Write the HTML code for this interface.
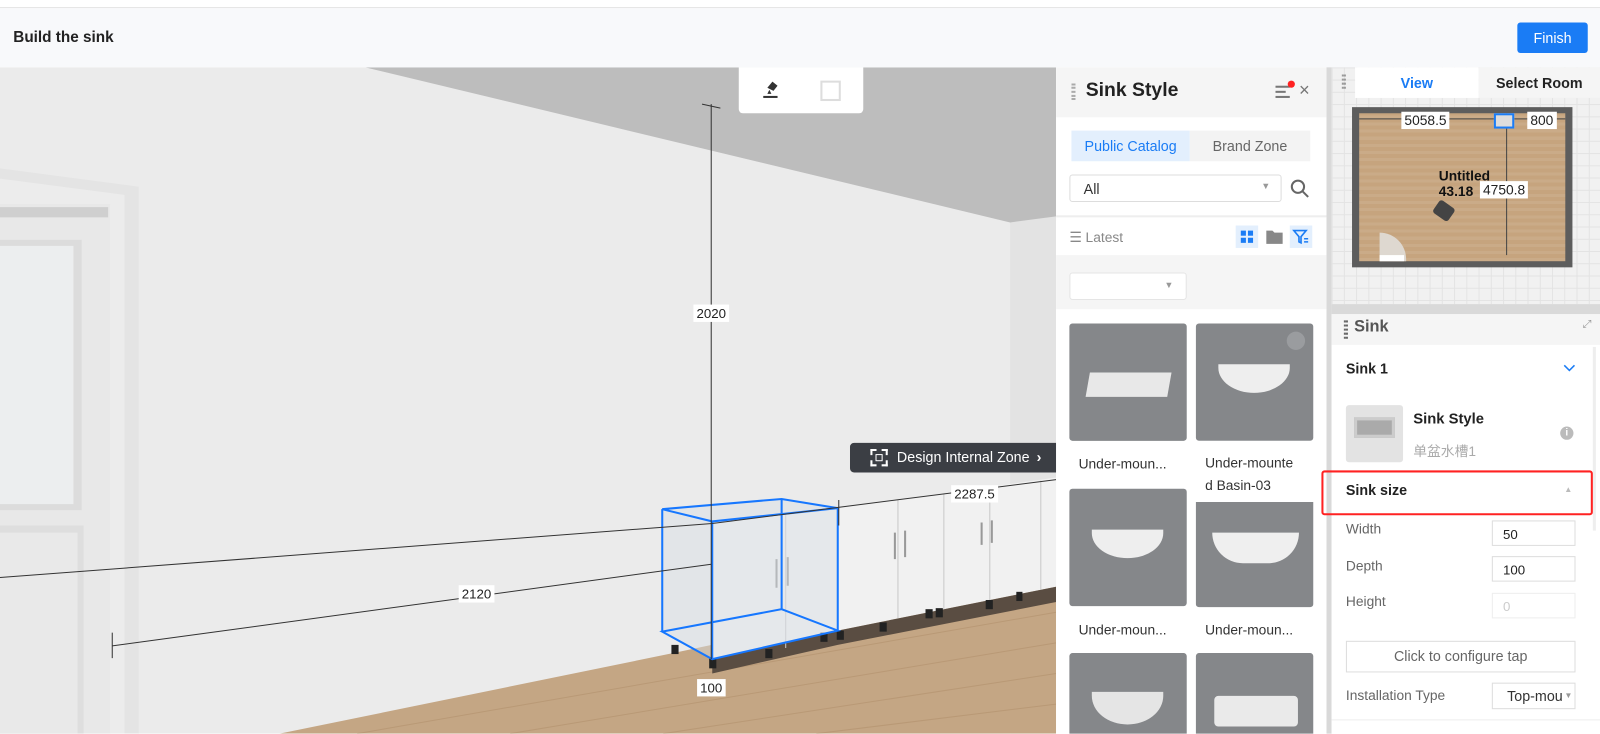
<!DOCTYPE html>
<html><head><meta charset="utf-8"><style>
*{box-sizing:border-box;margin:0;padding:0}
html,body{width:1600px;height:733px;overflow:hidden;background:#fff;font-family:"Liberation Sans","Noto Sans CJK SC",sans-serif;color:#222}
#w{position:absolute;left:0;top:0;width:1568px;height:719px;transform:scale(1.0204);transform-origin:0 0}
.a{position:absolute}
.lbl{position:absolute;background:#fff;font-size:13px;color:#222;padding:1px 3px;transform:translate(-50%,-50%);white-space:nowrap}
.card{position:absolute;width:115px;height:115px;background:#85878a;border-radius:3px}
.cap{position:absolute;font-size:13.5px;color:#333;width:120px}
.inp{position:absolute;left:1462px;width:82px;height:25px;border:1px solid #ddd;background:#fff;font-size:13px;padding:5px 10px;color:#222}
.fl{position:absolute;left:1319px;font-size:13.5px;color:#666}
</style></head><body><div id="w">
<div class="a" style="left:0;top:0;width:1568px;height:8px;background:#fff;border-bottom:1px solid #e2e2e2"></div>
<div class="a" style="left:0;top:8px;width:1568px;height:58px;background:#f8f9fb"></div>
<div class="a" style="left:13px;top:28px;font-size:15px;font-weight:bold;color:#222">Build the sink</div>
<div class="a" style="left:1487px;top:22px;width:69px;height:30px;background:#1a7cf5;border-radius:3px;color:#fff;font-size:14px;text-align:center;line-height:30px">Finish</div>

<svg class="a" style="left:0;top:66px" width="1035" height="653" viewBox="0 66 1035 653">
<rect x="0" y="66" width="1035" height="653" fill="#e9e9e9"/>
<polygon points="0,66 700,66 990,218 990,719 0,719" fill="#ebebeb"/>
<polygon points="990,218 1035,212 1035,719 990,719" fill="#e3e3e3"/>
<polygon points="358,66 1035,66 1035,212 990,218" fill="#bdbdbd"/>
<polygon points="0,165 136,183 136,719 0,719" fill="#e4e4e4"/>
<polygon points="0,175 122,191 122,719 0,719" fill="#ececec"/>
<rect x="0" y="200" width="108" height="519" fill="#e8e8e8"/>
<rect x="0" y="203" width="106" height="10" fill="#cfcfcf"/>
<rect x="0" y="235" width="80" height="265" fill="#dcdcdc"/>
<rect x="0" y="241" width="72" height="253" fill="#eceeef"/>
<rect x="0" y="515" width="82" height="204" fill="#dedede"/>
<rect x="0" y="522" width="76" height="197" fill="#e9e9e9"/>
<polygon points="274,719 660,640 1035,560 1035,719" fill="#c4a684"/>
<g stroke="#b2916d" stroke-width="1" opacity=".6"><line x1="350" y1="719" x2="1035" y2="600"/><line x1="500" y1="719" x2="1035" y2="630"/><line x1="650" y1="719" x2="1035" y2="660"/><line x1="800" y1="719" x2="1035" y2="690"/></g>
<polygon points="698,511 821,498 1035,468 1035,575 821,618 698,646" fill="#f1f1f1"/>
<polygon points="698,646 821,618 1035,575 1035,590 821,632 698,660" fill="#5a4d42"/>
<g stroke="#c8c8c8"><line x1="770" y1="505" x2="770" y2="635"/><line x1="880" y1="490" x2="880" y2="606"/><line x1="925" y1="484" x2="925" y2="597"/><line x1="970" y1="478" x2="970" y2="588"/><line x1="1020" y1="471" x2="1020" y2="578"/></g>
<g fill="#222"><rect x="658" y="632" width="7" height="9"/><rect x="695" y="645" width="7" height="10"/><rect x="750" y="636" width="7" height="9"/><rect x="804" y="620" width="7" height="9"/><rect x="820" y="618" width="7" height="9"/><rect x="862" y="610" width="7" height="9"/><rect x="907" y="597" width="7" height="9"/><rect x="917" y="596" width="7" height="9"/><rect x="966" y="588" width="7" height="9"/><rect x="996" y="580" width="6" height="9"/></g>
<g stroke="#999" stroke-width="2" fill="none"><path d="M761 548v28M772 546v28M877 522v26M887 520v26M962 512v22M972 510v22"/></g>
<polygon points="649,499 766,489 821,498 821,618 698,646 649,619" fill="#d8dde5" opacity=".45"/>
<g stroke="#1677ff" stroke-width="2" fill="none"><polygon points="649,499 766,489 821,498 698,511"/><polygon points="649,619 766,597 821,618 698,646"/><line x1="649" y1="499" x2="649" y2="619"/><line x1="766" y1="489" x2="766" y2="597"/><line x1="821" y1="498" x2="821" y2="618"/><line x1="698" y1="511" x2="698" y2="646"/></g>
<g stroke="#333" stroke-width="1"><line x1="697" y1="102" x2="697" y2="646"/><line x1="688" y1="102" x2="706" y2="106"/><line x1="0" y1="566" x2="698" y2="513"/><line x1="698" y1="513" x2="1035" y2="470"/><line x1="110" y1="633" x2="697" y2="553"/><line x1="110" y1="620" x2="110" y2="645"/><line x1="822" y1="490" x2="822" y2="515"/></g>
</svg>
<div class="lbl" style="left:697px;top:307px">2020</div>
<div class="lbl" style="left:467px;top:582px">2120</div>
<div class="lbl" style="left:955px;top:484px">2287.5</div>
<div class="lbl" style="left:697px;top:674px">100</div>
<div class="a" style="left:724px;top:66px;width:122px;height:45px;background:#fff;border-radius:0 0 4px 4px"></div>
<svg class="a" style="left:746px;top:76px" width="22" height="22" viewBox="0 0 22 22"><path d="M6 10l5-6 5 4-4 5z" fill="#333"/><path d="M8 12l-2 4h4z" fill="#333"/><rect x="2" y="18" width="14" height="2" fill="#333"/></svg>
<div class="a" style="left:804px;top:79px;width:20px;height:20px;border:2px solid #ddd"></div>
<div class="a" style="left:833px;top:434px;width:202px;height:29px;background:#3b3e44;border-radius:4px 0 0 4px;color:#fff;font-size:14px;line-height:29px;padding-left:46px">Design Internal Zone <span style="font-weight:bold;margin-left:3px">›</span></div>
<div class="a" style="left:853px;top:440px;width:17px;height:17px;border:2px dashed #fff"><div style="margin:3px;width:7px;height:7px;border:1.5px solid #fff"></div></div>

<div class="a" style="left:1035px;top:66px;width:265px;height:653px;background:#fff"></div>
<div class="a" style="left:1035px;top:66px;width:265px;height:49px;background:#f5f5f5"></div>
<div class="a" style="left:1050px;top:82px;width:4px;height:16px;border-left:2px dotted #aaa;border-right:2px dotted #aaa"></div>
<div class="a" style="left:1064px;top:78px;font-size:19px;font-weight:bold;color:#222">Sink Style</div>
<div class="a" style="left:1250px;top:84px;width:14px;height:12px;border-top:2px solid #777;border-bottom:2px solid #777"><div style="margin-top:3px;width:10px;border-top:2px solid #777"></div></div>
<div class="a" style="left:1262px;top:79px;width:7px;height:7px;border-radius:50%;background:#f22"></div>
<div class="a" style="left:1273px;top:78px;font-size:18px;color:#777">×</div>
<div class="a" style="left:1050px;top:128px;width:116px;height:30px;background:#e3effd;color:#1a7cf5;font-size:14px;text-align:center;line-height:30px">Public Catalog</div>
<div class="a" style="left:1166px;top:128px;width:118px;height:30px;background:#f3f3f3;color:#666;font-size:14px;text-align:center;line-height:30px">Brand Zone</div>
<div class="a" style="left:1048px;top:171px;width:208px;height:27px;border:1px solid #ddd;border-radius:3px;font-size:14px;color:#333;padding:5px 13px">All<span style="position:absolute;right:10px;top:5px;font-size:9px;color:#999">▼</span></div>
<svg class="a" style="left:1264px;top:175px" width="20" height="20"><circle cx="8" cy="8" r="6" stroke="#666" stroke-width="2" fill="none"/><line x1="12.5" y1="12.5" x2="18" y2="18" stroke="#666" stroke-width="2"/></svg>
<div class="a" style="left:1035px;top:211px;width:265px;height:2px;background:#eee"></div>
<div class="a" style="left:1048px;top:225px;font-size:13.5px;color:#888">☰ Latest</div>
<div class="a" style="left:1211px;top:221px;width:22px;height:22px;background:#e3effd"><svg width="22" height="22"><g fill="#1a7cf5"><rect x="5" y="5" width="5" height="5"/><rect x="12" y="5" width="5" height="5"/><rect x="5" y="12" width="5" height="5"/><rect x="12" y="12" width="5" height="5"/></g></svg></div>
<svg class="a" style="left:1240px;top:224px" width="18" height="16"><path d="M1 2h6l2 2h8v11H1z" fill="#888"/></svg>
<div class="a" style="left:1264px;top:221px;width:22px;height:22px;background:#e3effd"><svg width="22" height="22"><path d="M4 5h12l-5 6v6l-2-1v-5z" fill="none" stroke="#1a7cf5" stroke-width="1.6"/><path d="M14 13h4M14 16h4" stroke="#1a7cf5" stroke-width="1.5"/></svg></div>
<div class="a" style="left:1035px;top:250px;width:265px;height:53px;background:#f5f5f5"></div>
<div class="a" style="left:1048px;top:267px;width:115px;height:27px;background:#fff;border:1px solid #e5e5e5;border-radius:3px"><span style="position:absolute;right:12px;top:6px;font-size:9px;color:#999">▼</span></div>
<div class="card" style="left:1048px;top:317px"><div class="a" style="left:18px;top:48px;width:80px;height:24px;background:#e8e8e8;transform:skewX(-10deg)"></div></div>
<div class="card" style="left:1172px;top:317px"><div class="a" style="left:22px;top:40px;width:70px;height:28px;background:#eee;border-radius:0 0 40px 40px/0 0 28px 28px"></div><div class="a" style="right:8px;top:8px;width:18px;height:18px;border-radius:50%;background:#9a9c9f"></div></div>
<div class="cap" style="left:1057px;top:447px">Under-moun...</div>
<div class="a" style="left:1172px;top:432px;width:115px;height:60px;background:#fff"></div>
<div class="cap" style="left:1181px;top:443px;line-height:22px">Under-mounte<br>d Basin-03</div>
<div class="card" style="left:1048px;top:479px"><div class="a" style="left:22px;top:40px;width:70px;height:28px;background:#eee;border-radius:0 0 40px 40px/0 0 28px 28px"></div></div>
<div class="card" style="left:1172px;top:492px;height:103px;border-radius:0 0 3px 3px"><div class="a" style="left:16px;top:30px;width:85px;height:30px;background:#efefef;border-radius:0 0 30px 30px"></div></div>
<div class="cap" style="left:1057px;top:610px">Under-moun...</div>
<div class="cap" style="left:1181px;top:610px">Under-moun...</div>
<div class="card" style="left:1048px;top:640px;height:79px;border-radius:3px 3px 0 0"><div class="a" style="left:22px;top:38px;width:70px;height:32px;background:#e5e5e5;border-radius:0 0 40px 40px/0 0 32px 32px"></div></div>
<div class="card" style="left:1172px;top:640px;height:79px;border-radius:3px 3px 0 0"><div class="a" style="left:18px;top:42px;width:82px;height:30px;background:#eaeaea;border-radius:4px"></div></div>

<div class="a" style="left:1300px;top:66px;width:5px;height:653px;background:#d9d9d9"></div>
<div class="a" style="left:1305px;top:66px;width:263px;height:232px;background-color:#f1f1f1;background-image:linear-gradient(#e3e3e3 1px,transparent 1px),linear-gradient(90deg,#e3e3e3 1px,transparent 1px);background-size:12px 12px"></div>
<div class="a" style="left:1305px;top:298px;width:263px;height:10px;background:#d9d9d9"></div>
<div class="a" style="left:1328px;top:66px;width:121px;height:30px;background:#fff;color:#1a7cf5;font-weight:bold;font-size:14px;text-align:center;line-height:30px">View</div>
<div class="a" style="left:1449px;top:66px;width:119px;height:30px;background:#f5f5f5;color:#222;font-weight:bold;font-size:14px;text-align:center;line-height:30px">Select Room</div>
<div class="a" style="left:1315px;top:73px;width:4px;height:14px;border-left:2px dotted #999;border-right:2px dotted #999"></div>
<div class="a" style="left:1325px;top:105px;width:216px;height:157px;background:#5d5d5d"></div>
<div class="a" style="left:1332px;top:111px;width:202px;height:145px;background:#c6a47e;background-image:repeating-linear-gradient(0deg,rgba(255,255,255,.08) 0 3px,transparent 3px 7px)"></div>
<div class="a" style="left:1476px;top:111px;width:1px;height:139px;background:#444"></div>
<div class="a" style="left:1332px;top:116px;width:202px;height:1px;background:#444"></div>
<div class="a" style="left:1352px;top:228px;width:26px;height:28px;background:#ded8d0;border-radius:0 26px 0 0"></div>
<div class="a" style="left:1352px;top:250px;width:24px;height:6px;background:#fff"></div>
<div class="lbl" style="left:1397px;top:118px;font-size:13.5px">5058.5</div>
<div class="a" style="left:1464px;top:111px;width:20px;height:15px;border:2px solid #1a7cf5;background:#ddd"></div>
<div class="lbl" style="left:1511px;top:118px;font-size:13.5px">800</div>
<div class="a" style="left:1410px;top:165px;font-size:13.5px;font-weight:bold;color:#111;line-height:15px">Untitled<br>43.18</div>
<div class="lbl" style="left:1474px;top:186px;font-size:13.5px">4750.8</div>
<div class="a" style="left:1406px;top:199px;width:18px;height:15px;background:#444;border-radius:3px;transform:rotate(35deg)"></div>

<div class="a" style="left:1305px;top:308px;width:263px;height:411px;background:#fff"></div>
<div class="a" style="left:1305px;top:308px;width:263px;height:30px;background:#f5f5f5"></div>
<div class="a" style="left:1317px;top:314px;width:4px;height:18px;border-left:2px dotted #666;border-right:2px dotted #666"></div>
<div class="a" style="left:1327px;top:312px;font-size:16px;font-weight:bold;color:#555">Sink</div>
<div class="a" style="left:1551px;top:312px;font-size:11px;color:#999">⤢</div>
<div class="a" style="left:1561px;top:340px;width:3px;height:180px;background:#eee"></div>
<div class="a" style="left:1319px;top:353px;font-size:14px;font-weight:bold;color:#222">Sink 1</div>
<svg class="a" style="left:1532px;top:357px" width="12" height="8"><path d="M1 1l5 5 5-5" stroke="#1a7cf5" stroke-width="1.5" fill="none"/></svg>
<div class="a" style="left:1319px;top:397px;width:56px;height:56px;background:#e3e3e3;border-radius:3px"><div style="margin:12px 8px;width:40px;height:20px;background:#aaa;border:3px solid #ccc"></div></div>
<div class="a" style="left:1385px;top:403px;font-size:14.5px;font-weight:bold;color:#222">Sink Style</div>
<div class="a" style="left:1385px;top:431px;font-size:13.5px;color:#aaa">单盆水槽1</div>
<div class="a" style="left:1529px;top:418px;width:13px;height:13px;border-radius:50%;background:#bbb;color:#fff;font-size:10px;text-align:center;line-height:13px;font-weight:bold">i</div>
<div class="a" style="left:1295px;top:461px;width:266px;height:44px;border:2px solid #f22;border-radius:3px"></div>
<div class="a" style="left:1319px;top:472px;font-size:14px;font-weight:bold;color:#222">Sink size</div>
<div class="a" style="left:1533px;top:475px;font-size:8px;color:#bbb">▲</div>
<div class="fl" style="top:511px">Width</div><div class="inp" style="top:510px">50</div>
<div class="fl" style="top:547px">Depth</div><div class="inp" style="top:545px">100</div>
<div class="fl" style="top:582px">Height</div><div class="inp" style="top:581px;color:#ccc;border-color:#eee">0</div>
<div class="a" style="left:1319px;top:628px;width:225px;height:31px;border:1px solid #ddd;font-size:14px;color:#666;text-align:center;line-height:29px">Click to configure tap</div>
<div class="fl" style="top:674px">Installation Type</div>
<div class="inp" style="top:669px;height:26px;overflow:hidden;white-space:nowrap;color:#333;font-size:14px;padding:4px 14px">Top-mou<span style="position:absolute;right:2px;top:7px;font-size:8px;color:#999;background:#fff">▼</span></div>
<div class="a" style="left:1305px;top:705px;width:263px;height:1px;background:#eee"></div>
</div></body></html>
